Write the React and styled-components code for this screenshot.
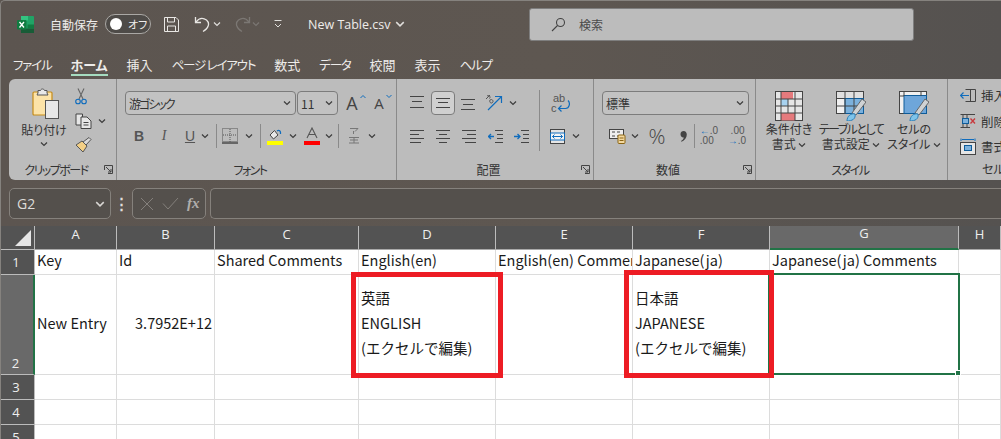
import React from "react";
import styled, { createGlobalStyle } from "styled-components";

const GlobalStyle = createGlobalStyle`
  html, body { margin: 0; padding: 0; width: 1001px; height: 439px; overflow: hidden; background: #5c5550; }
  * { box-sizing: border-box; }
`;

const uiFont = `"Noto Sans CJK JP", "Noto Sans", sans-serif`;

const TABS = [
  { label: "ファイル", kana: true },
  { label: "ホーム", active: true },
  { label: "挿入" },
  { label: "ページ レイアウト", kana: true },
  { label: "数式" },
  { label: "データ", kana: true },
  { label: "校閲" },
  { label: "表示" },
  { label: "ヘルプ", kana: true },
];

const Chev = ({ color = "#3c3c3c", size = 8 }) => (
  <svg width={size} height={size} viewBox="0 0 8 8" fill="none" stroke={color} strokeWidth="1.2">
    <path d="M1 2.5 L4 5.5 L7 2.5" />
  </svg>
);

const Launcher = () => (
  <svg width="9" height="9" viewBox="0 0 9 9" fill="none" stroke="#444" strokeWidth="1">
    <path d="M0.5 5 V0.5 H8.5 V8.5 H4" />
    <path d="M2 2 L7 7 M7 4 V7 H4" />
  </svg>
);

const ExcelLogo = () => (
  <svg width="17" height="17" viewBox="0 0 17 17">
    <rect x="4" y="0" width="13" height="17" rx="1" fill="#21a366" />
    <rect x="4" y="0" width="7" height="4.5" fill="#33c481" />
    <rect x="10.5" y="4.5" width="6.5" height="4" fill="#21a366" />
    <rect x="10.5" y="8.5" width="6.5" height="4" fill="#107c41" />
    <rect x="4" y="12.5" width="13" height="4.5" fill="#185c37" />
    <rect x="0" y="4" width="9.5" height="9.5" rx="1" fill="#107c41" />
    <path d="M2.5 6 L7 11.5 M7 6 L2.5 11.5" stroke="#fff" strokeWidth="1.3" />
  </svg>
);

const SaveIcon = () => (
  <svg width="17" height="17" viewBox="0 0 17 17" fill="none" stroke="#e8e6e3" strokeWidth="1">
    <path d="M1.5 1.5 H13 L15.5 4 V15.5 H1.5 Z" />
    <path d="M4.5 1.5 V6 H11.5 V1.5 M4.5 15.5 V10 H12.5 V15.5" />
  </svg>
);

const UndoIcon = ({ color, flip }) => (
  <svg width="18" height="18" viewBox="0 0 18 18" fill="none" stroke={color} strokeWidth="1.3" style={flip ? { transform: "scaleX(-1)" } : undefined}>
    <path d="M1.5 2 V7.5 H7" />
    <path d="M2 7 C5 3 9 2.5 12.5 5 C16 8 15 13 9 16.5" />
  </svg>
);

const CustomizeIcon = () => (
  <svg width="10" height="10" viewBox="0 0 10 10" fill="none" stroke="#e0dedb" strokeWidth="1">
    <path d="M1.5 1.5 H8.5 M2 5 L5 8 L8 5" />
  </svg>
);

const SearchIcon = () => (
  <svg width="15" height="15" viewBox="0 0 15 15" fill="none" stroke="#444" strokeWidth="1.1">
    <circle cx="9.5" cy="5.5" r="4" />
    <path d="M6.5 8.5 L1 14" />
  </svg>
);

const PasteIcon = () => (
  <svg width="28" height="32" viewBox="0 0 28 32">
    <rect x="1" y="4" width="19" height="23" rx="1" fill="#fce3a8" stroke="#c68b17" strokeWidth="1.2" />
    <path d="M6 5 V2.5 H8.5 C9 0.5 12 0.5 12.5 2.5 H15 V5 L16 7 H5 Z" fill="#e8e8e8" stroke="#555" />
    <rect x="13.5" y="12.5" width="13" height="18" fill="#e8e8e8" stroke="#555" />
  </svg>
);

const ScissorsIcon = () => (
  <svg width="12" height="17" viewBox="0 0 12 17" fill="none" strokeWidth="1.1">
    <path d="M3 0.5 L8 11 M9 0.5 L4 11" stroke="#666" />
    <circle cx="3" cy="13.5" r="2.3" stroke="#0f6cbd" />
    <circle cx="9" cy="13.5" r="2.3" stroke="#0f6cbd" />
  </svg>
);

const CopyIcon = () => (
  <svg width="17" height="16" viewBox="0 0 17 16" fill="#e6e6e6" stroke="#444" strokeWidth="1">
    <path d="M1 1 H7.5 V12 H1 Z" />
    <path d="M6 4 H12 L16 8 V15.5 H6 Z" />
    <path d="M8.5 9.5 H13.5 M8.5 12 H13.5" />
  </svg>
);

const BrushIcon = () => (
  <svg width="17" height="16" viewBox="0 0 17 16">
    <path d="M1 8 L7 4 L12 9 L8 15 Z" fill="#f3cf85" stroke="#555" />
    <path d="M8 5 L14 0.5 L16 2.5 L11 8 Z" fill="#d8d8d8" stroke="#555" />
  </svg>
);

const BorderIcon = () => (
  <svg width="16" height="16" viewBox="0 0 16 16" fill="none">
    <rect x="0.5" y="0.5" width="15" height="13" stroke="#555" strokeDasharray="1 1" />
    <path d="M8 1 V14 M1 7 H15" stroke="#555" strokeDasharray="1 1" />
    <path d="M0 15 H16" stroke="#111" strokeWidth="1.2" />
  </svg>
);

const FillIcon = () => (
  <svg width="16" height="17" viewBox="0 0 16 17">
    <path d="M3 7 L7.5 2.5 L11 7 L6.5 11 Z" fill="#e8e8e8" stroke="#444" />
    <path d="M10 3 C12 1.5 14 3 13.5 6" fill="none" stroke="#0f6cbd" strokeWidth="1.3" />
    <rect x="0" y="13" width="16" height="4" fill="#ffff00" />
  </svg>
);

const FontColorIcon = () => (
  <svg width="16" height="18" viewBox="0 0 16 18">
    <path d="M3 11 L8 1 L13 11 M5 7.5 H11" fill="none" stroke="#555" strokeWidth="1.1" />
    <rect x="0" y="14" width="16" height="4" fill="#ff0000" />
  </svg>
);

const PhoneticIcon = () => (
  <svg width="14" height="18" viewBox="0 0 14 18" fill="none" stroke="#777">
    <path d="M3 1.5 H11 L8 4.5 M6.5 4 V7" />
    <path d="M2 10.5 H12 M3 13 H11 M2 16 H12 M7 10 V16" />
  </svg>
);

const FontSizeCaret = ({ down }) => (
  <svg width="6" height="5" viewBox="0 0 6 5" fill="none" stroke="#0f6cbd" strokeWidth="1">
    <path d={down ? "M0.5 1 L3 3.5 L5.5 1" : "M0.5 4 L3 1.5 L5.5 4"} />
  </svg>
);

const AlignLines = ({ lines }) => (
  <svg width="14" height="14" viewBox="0 0 14 14" fill="none" stroke="#444" strokeWidth="1">
    {lines.map(([y, a, b]) => (
      <path key={y} d={`M${a} ${y + 0.5} H${b}`} />
    ))}
  </svg>
);

const HAlignIcon = ({ type }) => {
  const rows = type === "left" ? [[0, 14], [0, 9], [0, 14], [0, 11]] : type === "center" ? [[0, 14], [3, 11], [0, 14], [3, 11]] : [[0, 14], [5, 14], [0, 14], [3, 14]];
  return (
    <svg width="14" height="13" viewBox="0 0 14 13" fill="none" stroke="#444">
      {rows.map(([a, b], i) => (
        <path key={i} d={`M${a} ${i * 4 + 0.5} H${b}`} />
      ))}
    </svg>
  );
};

const IndentIcon = ({ increase }) => (
  <svg width="15" height="13" viewBox="0 0 15 13" fill="none">
    <path d="M7 0.5 H15 M9 4.5 H15 M9 8.5 H15 M7 12.5 H15" stroke="#444" />
    <path d={increase ? "M0 6.5 H6 M3.5 4 L6 6.5 L3.5 9" : "M6 6.5 H0.5 M3 4 L0.5 6.5 L3 9"} stroke="#0f6cbd" strokeWidth="1.3" />
  </svg>
);

const OrientIcon = () => (
  <svg width="18" height="18" viewBox="0 0 18 18" fill="none">
    <path d="M5 1 L1 5 M2 2 C4 0.5 6 3 4.5 4.5 M5 6 C7 4.5 9 7 7.5 8.5 C6 10 4 8 5 6" stroke="#555" />
    <path d="M3 16 L16 3 M10 2.5 H16.5 V9" stroke="#0f6cbd" strokeWidth="1.2" />
  </svg>
);

const WrapIcon = () => (
  <svg width="13" height="13" viewBox="0 0 13 13" fill="none" stroke="#0f6cbd" strokeWidth="1.2">
    <path d="M11 0.5 C13.5 3 12.5 8.5 8.5 8.5 H1.5" />
    <path d="M4.5 5.5 L1.5 8.5 L4.5 11.5" />
  </svg>
);

const MergeIcon = () => (
  <svg width="15" height="15" viewBox="0 0 15 15" fill="none">
    <rect x="0.5" y="0.5" width="14" height="14" fill="#e6e6e6" stroke="#444" />
    <rect x="0.5" y="4" width="14" height="7" fill="#f4f4f4" stroke="#0f6cbd" />
    <path d="M2.5 7.5 H12.5 M4.5 5.5 L2.5 7.5 L4.5 9.5 M10.5 5.5 L12.5 7.5 L10.5 9.5" stroke="#0f6cbd" />
  </svg>
);

const CurrencyIcon = () => (
  <svg width="17" height="15" viewBox="0 0 17 15">
    <rect x="0.5" y="0.5" width="14" height="9" fill="#eee" stroke="#444" />
    <path d="M3 3 H6 M3 7 H6 M8 3 H11 M8 7 H11" stroke="#444" />
    <rect x="9" y="6" width="7" height="8.5" rx="1" fill="#f3d8a0" stroke="#8a6413" />
    <path d="M10.5 9 H14.5 M10.5 11.5 H14.5" stroke="#8a6413" />
  </svg>
);

const CommaIcon = () => (
  <svg width="7" height="11" viewBox="0 0 7 11">
    <path d="M0.5 3.2 C0.5 1.2 2 0 3.6 0 C5.6 0 6.8 1.6 6.8 3.6 C6.8 6.6 4.8 9.6 1.6 10.8 L1 10 C2.6 9 3.6 7.6 3.8 6.4 C2 6.8 0.5 5.4 0.5 3.2 Z" fill="#444" />
  </svg>
);

const CondFormatIcon = () => (
  <svg width="28" height="30" viewBox="0 0 28 30">
    <rect x="0.5" y="0.5" width="27" height="29" fill="#e6e6e6" stroke="#444" />
    <rect x="6" y="1" width="12" height="7" fill="#e57a7d" />
    <rect x="6" y="8" width="7" height="7" fill="#a8d2ef" />
    <rect x="6" y="22" width="14" height="7.5" fill="#e57a7d" />
    <path d="M6 0 V30 M13 8 V22 M20 0 V30 M0 8 H28 M0 15 H28 M0 22 H28" stroke="#444" fill="none" />
  </svg>
);

const TableFormatIcon = () => (
  <svg width="30" height="30" viewBox="0 0 30 30">
    <rect x="0.5" y="0.5" width="27" height="22" fill="#f0f0f0" stroke="#444" />
    <rect x="0.5" y="0.5" width="27" height="7" fill="#e0e0e0" stroke="#444" />
    <rect x="9" y="7.5" width="18.5" height="15" fill="#7bb1dd" stroke="#0f5c99" />
    <path d="M9 0 V23 M18 0 V23 M0 15 H28" stroke="#444" fill="none" />
    <path d="M16 22 L26 8 L30 11 L20 24 Z" fill="#cfd2d4" stroke="#666" />
    <path d="M11 30 C11 25 15 22 19 23 C20 28 16 30 11 30 Z" fill="#7fc4ea" stroke="#2c7fb8" />
  </svg>
);

const CellStyleIcon = () => (
  <svg width="30" height="30" viewBox="0 0 30 30">
    <rect x="0.5" y="0.5" width="27" height="22" fill="#f0f0f0" stroke="#444" />
    <rect x="5" y="4.5" width="22.5" height="18" fill="#6ea6da" stroke="#0f5c99" />
    <path d="M5 0 V5 M0 5 H5 M22 0 V5" stroke="#444" fill="none" />
    <path d="M16 22 L26 8 L30 11 L20 24 Z" fill="#cfd2d4" stroke="#666" />
    <path d="M11 30 C11 25 15 22 19 23 C20 28 16 30 11 30 Z" fill="#7fc4ea" stroke="#2c7fb8" />
  </svg>
);

const InsertCellIcon = () => (
  <svg width="16" height="13" viewBox="0 0 16 13" fill="none">
    <path d="M5.5 0.5 H15.5 V12.5 H5.5 M10.5 0.5 V12.5" stroke="#444" />
    <path d="M0.5 6.5 H9 M3.5 3.5 L0.5 6.5 L3.5 9.5" stroke="#0f6cbd" strokeWidth="1.2" />
  </svg>
);

const DeleteCellIcon = () => (
  <svg width="16" height="14" viewBox="0 0 16 14" fill="none">
    <path d="M0.5 0.5 H15 M0.5 13.5 H10 M3 0.5 V13.5 M7 0.5 V13.5" stroke="#444" />
    <rect x="2.5" y="4.5" width="6" height="5" fill="#7bb1dd" stroke="#0f5c99" />
    <path d="M10.5 4.5 L15 9.5 M15 4.5 L10.5 9.5" stroke="#c8383c" strokeWidth="1.3" />
  </svg>
);

const FormatCellIcon = () => (
  <svg width="16" height="17" viewBox="0 0 16 17" fill="none">
    <path d="M1 0.5 V3 M15 0.5 V3 M2 1.5 H14" stroke="#0f6cbd" />
    <rect x="0.5" y="4.5" width="15" height="12" fill="#e6e6e6" stroke="#444" />
    <rect x="4.5" y="7.5" width="7" height="5" fill="#7bb1dd" stroke="#0f5c99" />
  </svg>
);

const App = () => (
  <Page>
    <GlobalStyle />
    <TitleBar>
      <QuickAccess>
        <ExcelLogo />
        <AutoSave>自動保存</AutoSave>
        <Toggle><Knob /><ToggleLabel>オフ</ToggleLabel></Toggle>
        <IconSlot $w={17} $ml={12}><SaveIcon /></IconSlot>
        <IconSlot $w={18} $ml={14}><UndoIcon color="#e8e6e3" /></IconSlot>
        <IconSlot $w={8} $ml={1}><Chev color="#e0dedb" /></IconSlot>
        <IconSlot $w={18} $ml={12}><UndoIcon color="#7b7773" flip /></IconSlot>
        <IconSlot $w={8} $ml={1}><Chev color="#7b7773" /></IconSlot>
        <IconSlot $w={10} $ml={13}><CustomizeIcon /></IconSlot>
        <DocName>New Table.csv</DocName>
        <IconSlot $w={10} $ml={4}><Chev color="#e0dedb" size={10} /></IconSlot>
      </QuickAccess>
      <SearchBox><SearchIcon /><span>検索</span></SearchBox>
    </TitleBar>
    <TabBar>
      {TABS.map((t) => (
        <Tab key={t.label} $active={t.active} $kana={t.kana}>{t.label}</Tab>
      ))}
    </TabBar>
    <Ribbon>
      <Group $w={108}>
        <GroupBody $pl={14}>
          <PasteButton>
            <PasteIcon />
            <PasteLabel>貼り付け</PasteLabel>
            <Chev />
          </PasteButton>
          <ClipboardTools>
            <ScissorsIcon />
            <CopyRow><CopyIcon /><Chev /></CopyRow>
            <BrushIcon />
          </ClipboardTools>
        </GroupBody>
        <GroupFooter>
          <span />
          <GroupTitle $kana>クリップボード</GroupTitle>
          <Launcher />
        </GroupFooter>
      </Group>
      <Group $w={280}>
        <GroupStack $pl={8}>
          <ToolRow>
            <Select $w={171}><SelectText $tight>游ゴシック</SelectText><Chev /></Select>
            <Select $w={41} $ml={1}><SelectText>11</SelectText><Chev /></Select>
            <IconSlot $w={16} $ml={6}><GrowFont>A</GrowFont><CaretSpot><FontSizeCaret /></CaretSpot></IconSlot>
            <IconSlot $w={14} $ml={12}><ShrinkFont>A</ShrinkFont><CaretSpot><FontSizeCaret down /></CaretSpot></IconSlot>
          </ToolRow>
          <ToolRow $pl={6}>
            <IconSlot $w={16}><StyleB>B</StyleB></IconSlot>
            <IconSlot $w={16} $ml={9}><StyleI>I</StyleI></IconSlot>
            <IconSlot $w={16} $ml={10}><StyleU>U</StyleU></IconSlot>
            <IconSlot $w={8} $ml={3}><Chev /></IconSlot>
            <ToolDivider $ml={7} />
            <IconSlot $w={16} $ml={5}><BorderIcon /></IconSlot>
            <IconSlot $w={8} $ml={7}><Chev /></IconSlot>
            <ToolDivider $ml={7} />
            <IconSlot $w={16} $ml={6}><FillIcon /></IconSlot>
            <IconSlot $w={8} $ml={6}><Chev /></IconSlot>
            <IconSlot $w={16} $ml={7}><FontColorIcon /></IconSlot>
            <IconSlot $w={8} $ml={5}><Chev /></IconSlot>
            <ToolDivider $ml={5} />
            <IconSlot $w={14} $ml={8}><PhoneticIcon /></IconSlot>
            <IconSlot $w={8} $ml={7}><Chev /></IconSlot>
          </ToolRow>
        </GroupStack>
        <GroupFooter>
          <span />
          <GroupTitle $kana>フォント</GroupTitle>
          <span />
        </GroupFooter>
      </Group>
      <Group $w={197}>
        <GroupBody $pl={13}>
          <GroupStack $w={129}>
            <ToolRow>
              <IconSlot $w={14}><AlignLines lines={[[0, 0, 14], [5, 2, 12], [11, 0, 14]]} /></IconSlot>
              <SelectedTool $ml={7}><AlignLines lines={[[2, 0, 14], [6, 2, 12], [11, 0, 14]]} /></SelectedTool>
              <IconSlot $w={14} $ml={6}><AlignLines lines={[[3, 0, 14], [8, 2, 12], [13, 0, 14]]} /></IconSlot>
              <IconSlot $w={18} $ml={10}><OrientIcon /></IconSlot>
              <IconSlot $w={8} $ml={6}><Chev /></IconSlot>
            </ToolRow>
            <ToolRow>
              <IconSlot $w={14}><HAlignIcon type="left" /></IconSlot>
              <IconSlot $w={14} $ml={12}><HAlignIcon type="center" /></IconSlot>
              <IconSlot $w={14} $ml={12}><HAlignIcon type="right" /></IconSlot>
              <IconSlot $w={15} $ml={12}><IndentIcon /></IconSlot>
              <IconSlot $w={15} $ml={11}><IndentIcon increase /></IconSlot>
            </ToolRow>
          </GroupStack>
          <VerticalRule />
          <GroupStack $pl={10}>
            <ToolRow>
              <WrapBox><WrapTop>ab</WrapTop><WrapBottom>c<WrapIcon /></WrapBottom></WrapBox>
            </ToolRow>
            <ToolRow>
              <MergeIcon />
              <IconSlot $w={8} $ml={7}><Chev /></IconSlot>
            </ToolRow>
          </GroupStack>
        </GroupBody>
        <GroupFooter>
          <span />
          <GroupTitle>配置</GroupTitle>
          <Launcher />
        </GroupFooter>
      </Group>
      <Group $w={162}>
        <GroupStack $pl={8}>
          <ToolRow>
            <Select $w={147}><SelectText>標準</SelectText><Chev /></Select>
          </ToolRow>
          <ToolRow $pl={7}>
            <CurrencyIcon />
            <IconSlot $w={8} $ml={5}><Chev /></IconSlot>
            <IconSlot $w={18} $ml={9}><Percent>%</Percent></IconSlot>
            <IconSlot $w={10} $ml={12}><CommaIcon /></IconSlot>
            <ToolDivider $ml={6} />
            <IconSlot $w={18} $ml={5}><Decimal><b>←</b>.0<br />.00</Decimal></IconSlot>
            <IconSlot $w={18} $ml={10}><Decimal>&nbsp;.00<br /><b>→</b>.0</Decimal></IconSlot>
          </ToolRow>
        </GroupStack>
        <GroupFooter>
          <span />
          <GroupTitle>数値</GroupTitle>
          <Launcher />
        </GroupFooter>
      </Group>
      <Group $w={192}>
        <GroupBody $pl={9} $pt={3}>
          <BigButton $w={48}>
            <CondFormatIcon />
            <BigLabel>条件付き<br />書式 <Chev /></BigLabel>
          </BigButton>
          <BigButton $w={68} $ml={4}>
            <TableFormatIcon />
            <BigLabel><Squeezed>テーブルとして</Squeezed><br />書式設定 <Chev /></BigLabel>
          </BigButton>
          <BigButton $w={50} $ml={4}>
            <CellStyleIcon />
            <BigLabel>セルの<br />スタイル <Chev /></BigLabel>
          </BigButton>
        </GroupBody>
        <GroupFooter>
          <span />
          <GroupTitle $kana $flush>スタイル</GroupTitle>
          <span />
        </GroupFooter>
      </Group>
      <Group $w={60} $last>
        <CellsList>
          <CellsRow><InsertCellIcon /><span>挿入</span></CellsRow>
          <CellsRow><DeleteCellIcon /><span>削除</span></CellsRow>
          <CellsRow><FormatCellIcon /><span>書式</span></CellsRow>
        </CellsList>
        <CellsTitle>セル</CellsTitle>
      </Group>
    </Ribbon>
    <FormulaBar>
      <NameBox><span>G2</span><Chev color="#d8d6d3" size={10} /></NameBox>
      <Dots>⋮</Dots>
      <FormulaButtons>
        <svg width="14" height="14" viewBox="0 0 14 14" stroke="#84807c" fill="none"><path d="M1 1 L13 13 M13 1 L1 13" /></svg>
        <svg width="17" height="13" viewBox="0 0 17 13" stroke="#84807c" fill="none"><path d="M1 6.5 L6 12 L16 1" /></svg>
        <FxLabel>fx</FxLabel>
      </FormulaButtons>
      <FormulaInput />
    </FormulaBar>
    <Sheet>
      <Corner>
        <svg width="16" height="16" viewBox="0 0 16 16"><path d="M16 0 V16 H0 Z" fill="#e6e6e6" /></svg>
      </Corner>
      {["A", "B", "C", "D", "E", "F", "G", "H"].map((c) => (
        <ColHeader key={c} $active={c === "G"}>{c}</ColHeader>
      ))}

      <RowHeader>1</RowHeader>
      <Cell>Key</Cell>
      <Cell>Id</Cell>
      <Cell>Shared Comments</Cell>
      <Cell>English(en)</Cell>
      <Cell $clip>English(en) Comments</Cell>
      <Cell>Japanese(ja)</Cell>
      <Cell>Japanese(ja) Comments</Cell>
      <Cell />

      <RowHeader $active $bottom>2</RowHeader>
      <Cell>New Entry</Cell>
      <Cell $right>3.7952E+12</Cell>
      <Cell />
      <Cell>
        <WrapLines>英語<br />ENGLISH<br />(エクセルで編集)</WrapLines>
        <Callout $l={-8} $r={-8} $t={-3} $b={-4} />
      </Cell>
      <Cell />
      <Cell>
        <WrapLines>日本語<br />JAPANESE<br />(エクセルで編集)</WrapLines>
        <Callout $l={-9} $r={-5} $t={-5} $b={-4} />
      </Cell>
      <Cell>
        <Selection><FillHandle /></Selection>
      </Cell>
      <Cell />

      {["3", "4", "5"].map((n) => (
        <React.Fragment key={n}>
          <RowHeader>{n}</RowHeader>
          {["A", "B", "C", "D", "E", "F", "G", "H"].map((c) => (
            <Cell key={c} />
          ))}
        </React.Fragment>
      ))}
    </Sheet>
  </Page>
);

export default App;

const Page = styled.div`
  width: 1001px;
  height: 439px;
  overflow: hidden;
  display: flex;
  flex-direction: column;
  font-family: ${uiFont};
  font-feature-settings: "palt";
  background: linear-gradient(90deg, #5c5550 0%, #5e5751 55%, #555250 100%);
  border-top: 1px solid #85827e;
  border-left: 1px solid #85827e;
  border-top-left-radius: 5px;
`;

const TitleBar = styled.div`
  height: 46px;
  flex: none;
  display: flex;
  align-items: center;
  padding-left: 16px;
`;

const QuickAccess = styled.div`
  width: 512px;
  display: flex;
  align-items: center;
`;

const AutoSave = styled.span`
  margin-left: 16px;
  color: #eeecea;
  font-size: 12px;
`;

const Toggle = styled.div`
  width: 46px;
  height: 20px;
  margin-left: 7px;
  border: 1px solid #aaa8a5;
  border-radius: 10px;
  display: flex;
  align-items: center;
  padding-left: 4px;
  background: #4e4b48;
`;

const Knob = styled.div`
  width: 12px;
  height: 12px;
  border-radius: 50%;
  background: #fff;
`;

const ToggleLabel = styled.span`
  margin-left: 6px;
  color: #eeecea;
  font-size: 11px;
`;

const IconSlot = styled.div`
  position: relative;
  width: ${(p) => p.$w}px;
  margin-left: ${(p) => p.$ml || 0}px;
  flex: none;
  display: flex;
  align-items: center;
  justify-content: center;
`;

const DocName = styled.span`
  margin-left: 25px;
  color: #eeecea;
  font-size: 12.5px;
  font-family: "Open Sans", sans-serif;
`;

const SearchBox = styled.div`
  width: 385px;
  height: 33px;
  display: flex;
  align-items: center;
  gap: 13px;
  padding-left: 21px;
  background: #bcbcbc;
  border: 1px solid #7e7e7e;
  border-radius: 3px;
  color: #4a4a4a;
  font-size: 12px;
`;

const TabBar = styled.div`
  height: 32px;
  flex: none;
  display: flex;
  gap: 19px;
  padding: 9px 0 0 12px;
`;

const Tab = styled.div`
  height: 20px;
  color: #eeecea;
  font-size: ${(p) => (p.$kana ? "12.5px" : "13px")};
  letter-spacing: ${(p) => (p.$kana ? "-1.2px" : "0")};
  line-height: 17px;
  font-weight: ${(p) => (p.$active ? 700 : 400)};
  border-bottom: ${(p) => (p.$active ? "2px solid #a6dcc0" : "none")};
  white-space: nowrap;
`;

const Ribbon = styled.div`
  height: 101px;
  flex: none;
  margin-left: 8px;
  display: flex;
  background: #bcbcbc;
  border-radius: 6px 0 0 6px;
  overflow: hidden;
  color: #333;
`;

const Group = styled.div`
  position: relative;
  width: ${(p) => p.$w}px;
  flex: none;
  padding: 9px 0 1px;
  display: flex;
  flex-direction: column;
  border-right: ${(p) => (p.$last ? "none" : "1px solid #8a8a8a")};
`;

const GroupBody = styled.div`
  flex: 1;
  display: flex;
  padding-left: ${(p) => p.$pl || 0}px;
  padding-top: ${(p) => p.$pt || 0}px;
`;

const GroupStack = styled.div`
  flex: ${(p) => (p.$w ? `0 0 ${p.$w}px` : 1)};
  display: flex;
  flex-direction: column;
  gap: 9px;
  padding: 3px 0 0 ${(p) => p.$pl || 0}px;
`;

const GroupFooter = styled.div`
  flex: none;
  height: 19px;
  display: grid;
  grid-template-columns: 1fr auto 1fr;
  align-items: center;
  justify-items: end;
  padding-right: 3px;
`;

const GroupTitle = styled.span`
  justify-self: center;
  margin-right: ${(p) => (p.$flush ? 0 : 10)}px;
  font-size: 12px;
  letter-spacing: ${(p) => (p.$kana ? "-1.5px" : "0")};
  white-space: nowrap;
`;

const Squeezed = styled.span`
  letter-spacing: -1.5px;
`;

const PasteButton = styled.div`
  width: 42px;
  display: flex;
  flex-direction: column;
  align-items: center;

  > svg:first-child {
    margin-left: 4px;
  }
`;

const PasteLabel = styled.span`
  font-size: 12px;
  line-height: 15px;
  margin: 2px 0 3px;
  white-space: nowrap;
`;

const ClipboardTools = styled.div`
  margin-left: 8px;
  display: flex;
  flex-direction: column;
  gap: 8px;
  align-items: flex-start;
  padding-left: 2px;
`;

const CopyRow = styled.div`
  display: flex;
  align-items: center;
  gap: 6px;
`;

const ToolRow = styled.div`
  height: 24px;
  display: flex;
  align-items: center;
  padding-left: ${(p) => p.$pl || 0}px;
`;

const Select = styled.div`
  width: ${(p) => p.$w}px;
  height: 24px;
  margin-left: ${(p) => p.$ml || 0}px;
  flex: none;
  display: flex;
  align-items: center;
  justify-content: space-between;
  padding: 0 4px 0 3px;
  border: 1px solid #7c7c7c;
  border-radius: 4px;
  background: #c2c2c2;
`;

const SelectText = styled.span`
  font-size: 12px;
  letter-spacing: ${(p) => (p.$tight ? "-2px" : "0")};
  color: #333;
`;

const GrowFont = styled.span`
  font-size: 18px;
  line-height: 20px;
  font-family: "Open Sans", sans-serif;
  color: #444;
`;

const ShrinkFont = styled.span`
  font-size: 15px;
  line-height: 20px;
  font-family: "Open Sans", sans-serif;
  color: #444;
`;

const CaretSpot = styled.span`
  position: absolute;
  right: -6px;
  top: 1px;
  display: flex;
`;

const StyleB = styled.span`
  font: 700 14px "Liberation Sans", sans-serif;
  color: #555;
`;

const StyleI = styled.span`
  font: italic 14px "Liberation Serif", serif;
  color: #555;
`;

const StyleU = styled.span`
  font: 14px "Liberation Sans", sans-serif;
  color: #555;
  text-decoration: underline;
`;

const ToolDivider = styled.div`
  width: 1px;
  height: 24px;
  flex: none;
  margin-left: ${(p) => p.$ml || 0}px;
  background: #8a8a8a;
`;

const VerticalRule = styled.div`
  width: 1px;
  height: 61px;
  flex: none;
  margin-top: 2px;
  background: #8a8a8a;
`;

const SelectedTool = styled.div`
  width: 24px;
  height: 24px;
  margin-left: ${(p) => p.$ml}px;
  flex: none;
  display: flex;
  align-items: center;
  justify-content: center;
  border: 1px solid #7c7c7c;
  border-radius: 4px;
  background: #d0d0d0;
`;

const WrapBox = styled.div`
  width: 20px;
  display: flex;
  flex-direction: column;
  font: 11px/10px "Liberation Sans", sans-serif;
  color: #555;
`;

const WrapTop = styled.span`
  padding-left: 3px;
`;

const WrapBottom = styled.span`
  display: flex;
  align-items: flex-end;
  padding-left: 1px;

  svg {
    margin-top: -4px;
  }
`;

const Percent = styled.span`
  font: 300 21px "Open Sans", sans-serif;
  color: #444;
`;

const Decimal = styled.span`
  font: 10px/10px "Liberation Sans", sans-serif;
  color: #555;
  white-space: nowrap;

  b {
    color: #0f6cbd;
    font-weight: 400;
  }
`;

const BigButton = styled.div`
  width: ${(p) => p.$w}px;
  margin-left: ${(p) => p.$ml || 0}px;
  flex: none;
  display: flex;
  flex-direction: column;
  align-items: center;
`;

const BigLabel = styled.div`
  font-size: 12px;
  line-height: 15px;
  text-align: center;
  white-space: nowrap;
`;

const CellsList = styled.div`
  flex: 1;
  display: flex;
  flex-direction: column;
  gap: 8.5px;
  margin-top: -1px;
  padding: 0 0 0 12px;
`;

const CellsRow = styled.div`
  height: 17px;
  display: flex;
  align-items: center;
  gap: 5px;
  font-size: 12.5px;
  white-space: nowrap;
`;

const CellsTitle = styled.div`
  height: 19px;
  padding-left: 34px;
  font-size: 12px;
`;

const FormulaBar = styled.div`
  height: 46px;
  flex: none;
  display: flex;
  align-items: flex-start;
  padding: 8px 0 0 8px;
`;

const NameBox = styled.div`
  width: 102px;
  height: 31px;
  display: flex;
  align-items: center;
  justify-content: space-between;
  padding: 0 5px 0 7px;
  border: 1px solid #85817c;
  border-radius: 5px;
  background: #54504c;
  color: #dedcd9;
  font: 14px "Open Sans", sans-serif;
`;

const Dots = styled.div`
  width: 21px;
  height: 31px;
  text-align: center;
  color: #e0dedb;
  font: 700 15px/31px "Liberation Sans", sans-serif;
`;

const FormulaButtons = styled.div`
  width: 74px;
  height: 31px;
  display: flex;
  align-items: center;
  gap: 8px;
  padding-left: 7px;
  border: 1px solid #85817c;
  border-radius: 5px;
  background: #54504c;
`;

const FxLabel = styled.span`
  font: italic 700 15px "Liberation Serif", serif;
  color: #b0aeab;
`;

const FormulaInput = styled.div`
  flex: 1;
  height: 31px;
  margin-left: 4px;
  border: 1px solid #85817c;
  border-right: none;
  border-radius: 5px 0 0 5px;
  background: #54504c;
`;

const Sheet = styled.div`
  flex: 1;
  margin-left: -1px;
  display: grid;
  grid-template-columns: 35px 82px 98px 144px 137px 137px 137px 189px 1fr;
  grid-template-rows: 24px 25px 100px 25px 25px 25px;
  background: #fff;
  font-family: ${uiFont};
  font-feature-settings: normal;
`;

const Corner = styled.div`
  display: flex;
  align-items: flex-end;
  justify-content: flex-end;
  padding: 0 3px 3px 0;
  background: #535353;
  border-right: 1px solid #bcbcbc;
  border-bottom: 1px solid #bcbcbc;
`;

const ColHeader = styled.div`
  display: flex;
  align-items: center;
  justify-content: center;
  padding-bottom: 8px;
  font: 13px "Open Sans", sans-serif;
  color: #efefef;
  background: ${(p) => (p.$active ? "#696969" : "#535353")};
  border-right: 1px solid #bcbcbc;
  border-bottom: ${(p) => (p.$active ? "2px solid #217346" : "1px solid #aaa")};
`;

const RowHeader = styled.div`
  display: flex;
  align-items: ${(p) => (p.$bottom ? "flex-end" : "center")};
  justify-content: center;
  padding: 0 2px ${(p) => (p.$bottom ? 2 : 0)}px 0;
  font: 13px "Open Sans", sans-serif;
  color: #efefef;
  background: ${(p) => (p.$active ? "#696969" : "#535353")};
  border-bottom: 1px solid #bcbcbc;
  border-right: ${(p) => (p.$active ? "2px solid #217346" : "1px solid #bcbcbc")};
`;

const Cell = styled.div`
  position: relative;
  min-width: 0;
  display: flex;
  align-items: center;
  justify-content: ${(p) => (p.$right ? "flex-end" : "flex-start")};
  padding: 0 2px 5px;
  border-right: 1px solid #dcdcdc;
  border-bottom: 1px solid #dcdcdc;
  color: #1a1a1a;
  font-size: 14.5px;
  white-space: nowrap;
  overflow: ${(p) => (p.$clip ? "hidden" : "visible")};
`;

const WrapLines = styled.div`
  line-height: 25px;
`;

const Callout = styled.div`
  position: absolute;
  left: ${(p) => p.$l}px;
  right: ${(p) => p.$r}px;
  top: ${(p) => p.$t}px;
  bottom: ${(p) => p.$b}px;
  border: 5px solid #ed1c24;
  z-index: 3;
  pointer-events: none;
`;

const Selection = styled.div`
  position: absolute;
  inset: -2px -2px -1px -2px;
  border: 2px solid #217346;
  z-index: 2;
`;

const FillHandle = styled.div`
  position: absolute;
  right: -3px;
  bottom: -3px;
  width: 6px;
  height: 6px;
  background: #217346;
  border: 1px solid #fff;
`;
